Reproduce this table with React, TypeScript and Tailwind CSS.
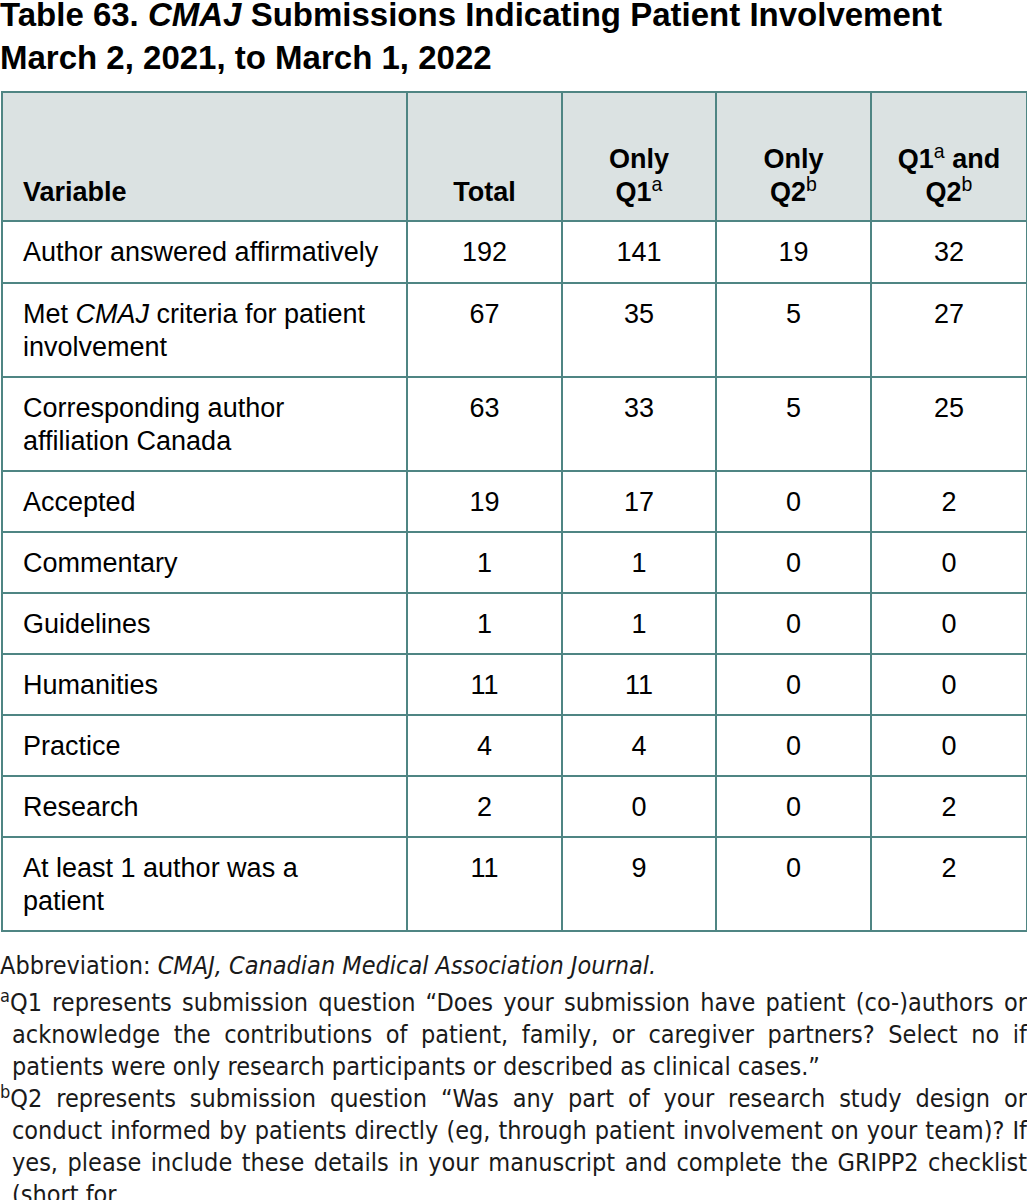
import React from "react";

type Row = { label: React.ReactNode; total: string; q1: string; q2: string; both: string };

const rows: Row[] = [
  { label: "Author answered affirmatively", total: "192", q1: "141", q2: "19", both: "32" },
  {
    label: (
      <>
        Met <i>CMAJ</i> criteria for patient involvement
      </>
    ),
    total: "67",
    q1: "35",
    q2: "5",
    both: "27",
  },
  { label: "Corresponding author affiliation Canada", total: "63", q1: "33", q2: "5", both: "25" },
  { label: "Accepted", total: "19", q1: "17", q2: "0", both: "2" },
  { label: "Commentary", total: "1", q1: "1", q2: "0", both: "0" },
  { label: "Guidelines", total: "1", q1: "1", q2: "0", both: "0" },
  { label: "Humanities", total: "11", q1: "11", q2: "0", both: "0" },
  { label: "Practice", total: "4", q1: "4", q2: "0", both: "0" },
  { label: "Research", total: "2", q1: "0", q2: "0", both: "2" },
  { label: "At least 1 author was a patient", total: "11", q1: "9", q2: "0", both: "2" },
];

const cell = "border-2 border-[#4f8583] px-[20px] pt-[14px] pb-[12px] align-top";
const head = "border-2 border-[#4f8583] px-[20px] pb-[11px] align-bottom font-bold text-center";

function Sup({ children }: { children: React.ReactNode }) {
  return <sup className="text-[0.72em] font-normal">{children}</sup>;
}

// one justified footnote line
function Line({ children, last }: { children: React.ReactNode; last?: boolean }) {
  return (
    <span className={last ? "block whitespace-nowrap" : "block text-justify [text-align-last:justify] whitespace-nowrap"}>
      {children}
    </span>
  );
}

export default function App() {
  return (
    <div className="bg-white w-[1027px] min-h-[1200px] text-black font-['Liberation_Sans',Arial,sans-serif]">
      {/* Title */}
      <h1 className="text-[33px] font-bold">
        <div className="leading-[30px]">
          Table 63. <i>CMAJ</i> Submissions Indicating Patient Involvement
        </div>
        <div className="leading-[30px] mt-[13px]">March 2, 2021, to March 1, 2022</div>
      </h1>

      {/* Table */}
      <table className="mt-[18px] ml-[1px] w-[1025px] border-collapse table-fixed text-[27px] leading-[33px]">
        <colgroup>
          <col className="w-[405px]" />
          <col className="w-[155px]" />
          <col className="w-[154px]" />
          <col className="w-[155px]" />
          <col className="w-[156px]" />
        </colgroup>
        <thead>
          <tr className="bg-[#dbe2e2] h-[129px]">
            <th className={`${head} text-left`}>Variable</th>
            <th className={head}>Total</th>
            <th className={head}>
              Only
              <br />
              Q1<Sup>a</Sup>
            </th>
            <th className={head}>
              Only
              <br />
              Q2<Sup>b</Sup>
            </th>
            <th className={head}>
              Q1<Sup>a</Sup> and
              <br />
              Q2<Sup>b</Sup>
            </th>
          </tr>
        </thead>
        <tbody>
          {rows.map((r, i) => (
            <tr key={i} className={i === 0 ? "h-[62px]" : ""}>
              <td className={cell}>{r.label}</td>
              <td className={`${cell} text-center`}>{r.total}</td>
              <td className={`${cell} text-center`}>{r.q1}</td>
              <td className={`${cell} text-center`}>{r.q2}</td>
              <td className={`${cell} text-center`}>{r.both}</td>
            </tr>
          ))}
        </tbody>
      </table>

      {/* Footnotes */}
      <div className="mt-[18px] w-[1027px] text-[25px] leading-[32px] font-['DejaVu_Sans_Condensed','Liberation_Sans',sans-serif] text-[#1a1a1a]">
        <p>
          Abbreviation: <i>CMAJ, Canadian Medical Association Journal.</i>
        </p>
        <p className="mt-[5px]">
          <Line>
            <sup className="text-[0.72em]">a</sup>Q1 represents submission question “Does your submission have patient (co-)authors or
          </Line>
          <span className="block pl-[12px]">
            <Line>acknowledge the contributions of patient, family, or caregiver partners? Select no if</Line>
            <Line last>patients were only research participants or described as clinical cases.”</Line>
          </span>
        </p>
        <p>
          <Line>
            <sup className="text-[0.72em]">b</sup>Q2 represents submission question “Was any part of your research study design or
          </Line>
          <span className="block pl-[12px]">
            <Line>conduct informed by patients directly (eg, through patient involvement on your team)? If</Line>
            <Line>yes, please include these details in your manuscript and complete the GRIPP2 checklist</Line>
            <Line last>(short for</Line>
          </span>
        </p>
      </div>
    </div>
  );
}
